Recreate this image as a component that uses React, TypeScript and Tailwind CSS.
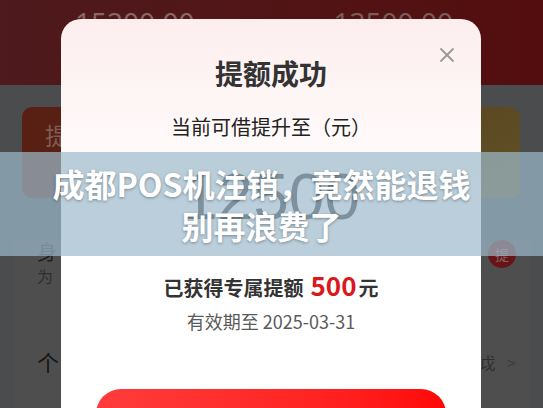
import { X } from 'lucide-react';

function PageBehind() {
  return (
    <div className="flex flex-col h-full">
      <div className="h-[85px] bg-linear-to-r from-[#4e1a1d] to-[#540d0e] flex pl-[75px] pr-[90px] justify-between">
        <span className="text-[28px] leading-none mt-[8px] text-[#8a6666] font-['Noto_Sans',sans-serif]">15200.00</span>
        <span className="text-[28px] leading-none mt-[8px] text-[#7c5a5a] font-['Noto_Sans',sans-serif]">13500.00</span>
      </div>
      <div className="flex-1 bg-[#4a4c4d] flex flex-col">
        <div className="flex justify-between px-[22px] pt-[22px] pr-[23px] h-[155px]">
          <div className="w-[200px] h-[91px] rounded-[10px] bg-[#581f13] pl-[23px] pt-[10px]">
            <span className="text-[24px] text-[#7e5c52]">提</span>
          </div>
          <div className="w-[200px] h-[91px] rounded-[10px] bg-linear-to-br from-[#574020] to-[#625426]" />
        </div>
        <div className="flex-1 mx-[14px] mr-[13px] bg-[#4e4e4e] flex flex-col px-[23px]">
          <div className="flex justify-between items-start">
            <div className="flex flex-col">
              <span className="text-[20px] leading-[24px] text-[#1e1e1e]">身</span>
              <span className="text-[16px] leading-[22px] text-[#2e2e2e] mt-[1px]">为</span>
            </div>
            <span className="w-[28px] h-[28px] rounded-full bg-[#671416] text-[#8a6060] text-[14px] flex items-center justify-center -mr-[9px]">提</span>
          </div>
          <div className="flex justify-between items-center mt-[58px]">
            <span className="text-[22px] text-[#161616]">个</span>
            <span className="text-[16px] text-[#2e2e2e] -mr-[9px]">戉 <span className="text-[#3c3c3c] ml-[8px]">&gt;</span></span>
          </div>
        </div>
      </div>
    </div>
  );
}

function Modal() {
  return (
    <div className="absolute left-[61px] top-[19px] w-[420px] h-[420px] rounded-[20px] bg-linear-to-b from-[#fdeeee] via-white via-45% to-white flex flex-col items-center pt-[36px]">
      <X className="absolute left-[374px] top-[24px] text-[#999]" size={24} strokeWidth={1.8} />
      <h2 className="text-[28px] leading-[36px] font-bold text-[#333]">提额成功</h2>
      <p className="mt-[23px] text-[20px] leading-[26px] text-[#222]">当前可借提升至（元）</p>
      <p className="mt-[21px] text-[64px] leading-[72px] text-[#333] font-['Liberation_Sans',sans-serif]">12500</p>
      <p className="mt-[36px] text-[20px] leading-[32px] font-bold text-[#333] flex items-baseline">
        已获得专属提额
        <span className="text-[26px] text-[#d9191c] ml-[7px] mr-[2px]">500</span>
        元
      </p>
      <p className="mt-[5px] text-[18px] leading-[24px] text-[#5a5a5a]">有效期至 2025-03-31</p>
      <div className="mt-[56px] w-[350px] h-[56px] rounded-[28px] bg-linear-to-r from-[#ff3b3b] to-[#ff0606]" />
    </div>
  );
}

function Banner() {
  return (
    <div className="absolute left-0 top-[152px] w-full h-[104px] bg-[rgba(156,186,204,0.7)] flex flex-col items-center justify-center pr-[20px]">
      <p className="text-[32px] leading-[42px] font-bold text-white [text-shadow:0_1px_3px_rgba(0,0,0,0.35)]">成都POS机注销，竟然能退钱</p>
      <p className="text-[32px] leading-[42px] font-bold text-white [text-shadow:0_1px_3px_rgba(0,0,0,0.35)]">别再浪费了</p>
    </div>
  );
}

export default function App() {
  return (
    <div className="relative w-[543px] h-[408px] overflow-hidden font-['Noto_Sans_CJK_SC',sans-serif]">
      <PageBehind />
      <Modal />
      <Banner />
    </div>
  );
}
